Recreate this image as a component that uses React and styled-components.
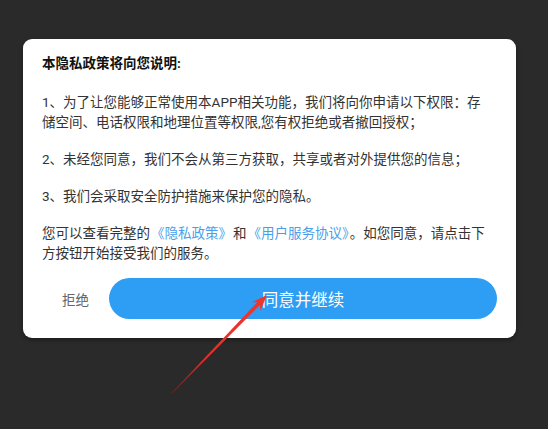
import React from 'react'
import styled, { createGlobalStyle } from 'styled-components'

const GlobalStyle = createGlobalStyle`
  html, body {
    margin: 0;
    padding: 0;
    background: #2a2a2a;
  }
  * {
    box-sizing: border-box;
  }
`

const Screen = styled.div`
  position: relative;
  width: 548px;
  height: 429px;
  background: #2a2a2a;
  padding: 39px 0 0 23px;
  font-family: "Roboto", "Noto Sans CJK SC", sans-serif;
  overflow: hidden;
`

const Dialog = styled.div`
  width: 493px;
  background: #ffffff;
  border-radius: 9px;
  box-shadow: 0 2px 4px rgba(0, 0, 0, 0.35);
  padding: 14px 19px 19px 19px;
  display: flex;
  flex-direction: column;
`

const Title = styled.div`
  font-size: 13.5px;
  line-height: 20px;
  font-weight: 700;
  color: #111;
  margin-bottom: 19px;
`

const Paragraph = styled.p`
  margin: 0 0 17px 0;
  font-size: 13.5px;
  line-height: 20px;
  color: #333;
  white-space: nowrap;

  &:last-of-type {
    margin-bottom: 15px;
  }
`

const Link = styled.span`
  color: #4a9fea;
  margin: 0 1px;
`

const Actions = styled.div`
  display: flex;
  align-items: center;
  height: 41px;
`

const Refuse = styled.button`
  width: 67px;
  height: 100%;
  border: none;
  background: none;
  padding: 0;
  font-family: inherit;
  font-size: 13.5px;
  color: #666;
`

const Agree = styled.button`
  flex: 1;
  height: 41px;
  border: none;
  border-radius: 21px;
  background: #2e9ef4;
  color: #ffffff;
  font-family: inherit;
  font-size: 16.5px;
  padding: 0;
`

const Pointer = styled.svg`
  position: absolute;
  left: 0;
  top: 0;
  width: 548px;
  height: 429px;
  pointer-events: none;
`

const App = () => {
  return (
    <Screen>
      <GlobalStyle />
      <Dialog>
        <Title>本隐私政策将向您说明:</Title>
        <Paragraph>
          1、为了让您能够正常使用本APP相关功能，我们将向你申请以下权限：存
          <br />
          储空间、电话权限和地理位置等权限,您有权拒绝或者撤回授权；
        </Paragraph>
        <Paragraph>
          2、未经您同意，我们不会从第三方获取，共享或者对外提供您的信息；
        </Paragraph>
        <Paragraph>3、我们会采取安全防护措施来保护您的隐私。</Paragraph>
        <Paragraph>
          您可以查看完整的<Link>《隐私政策》</Link>和<Link>《用户服务协议》</Link>。如您同意，请点击下
          <br />
          方按钮开始接受我们的服务。
        </Paragraph>
        <Actions>
          <Refuse>拒绝</Refuse>
          <Agree>同意并继续</Agree>
        </Actions>
      </Dialog>
      <Pointer viewBox="0 0 548 429">
        <defs>
          <linearGradient id="arrowFade" x1="172" y1="393" x2="267" y2="295" gradientUnits="userSpaceOnUse">
            <stop offset="0" stopColor="#b8221c" stopOpacity="0.5" />
            <stop offset="0.35" stopColor="#e2302a" />
            <stop offset="1" stopColor="#f0362c" />
          </linearGradient>
        </defs>
        <polygon
          fill="url(#arrowFade)"
          points="267,295 260.2,310.7 260,305 172.2,393.2 171.8,392.8 257.2,302.2 251.6,302.3"
        />
      </Pointer>
    </Screen>
  )
}

export default App
